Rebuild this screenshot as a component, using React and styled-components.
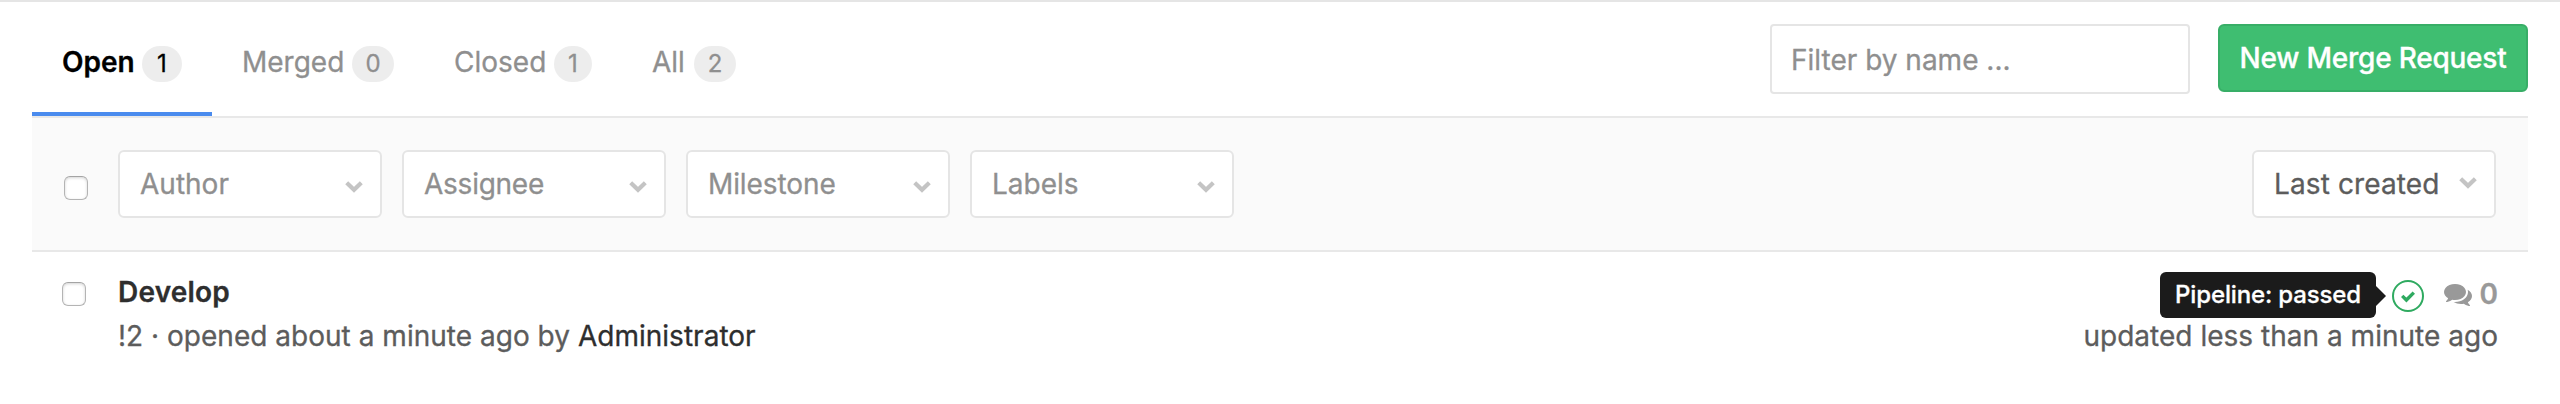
import React from 'react';
import styled, { createGlobalStyle } from 'styled-components';

const GlobalStyle = createGlobalStyle`
  *, *::before, *::after { box-sizing: border-box; }
  body {
    margin: 0;
    background: #fff;
    color: #5c5c5c;
    font: 400 28px/36px Inter, "Liberation Sans", sans-serif;
    -webkit-text-stroke: 0.3px;
  }
`;

const Page = styled.div`
  height: 404px;
  padding: 0 32px;
  border-top: 2px solid #e5e5e5;
  overflow: hidden;
`;

const TopBar = styled.header`
  display: flex;
  justify-content: space-between;
  height: 116px;
  border-bottom: 2px solid #e8e8e8;
`;

const Tabs = styled.nav`
  display: flex;
`;

const Tab = styled.a`
  display: flex;
  justify-content: space-between;
  width: ${(p) => p.$width}px;
  height: 114px;
  padding: 42px 30px 0;
  border-bottom: 4px solid ${(p) => (p.$active ? '#4a8bee' : 'transparent')};
  color: ${(p) => (p.$active ? '#000' : '#8f8f8f')};
  font-weight: ${(p) => (p.$active ? 600 : 400)};
  white-space: nowrap;
`;

const Badge = styled.span`
  width: ${(p) => p.$width}px;
  height: 36px;
  margin-top: 2px;
  border-radius: 18px;
  background: #ededed;
  font-size: 24px;
  font-weight: 400;
  line-height: 35px;
  text-align: center;
`;

const Actions = styled.div`
  display: flex;
  align-items: flex-start;
  gap: 28px;
  padding-top: 22px;
`;

const SearchInput = styled.input`
  width: 420px;
  height: 70px;
  padding: 2px 19px 0;
  border: 2px solid #e5e5e5;
  border-radius: 4px;
  background: #fff;
  color: #5c5c5c;
  font: inherit;
  outline: none;
  &::placeholder {
    color: #8f8f8f;
    opacity: 1;
  }
`;

const PrimaryButton = styled.button`
  width: 310px;
  height: 68px;
  padding: 0;
  border: 2px solid #38ae67;
  border-radius: 6px;
  background: #3fbe71;
  color: #fff;
  font: inherit;
  font-weight: 500;
  letter-spacing: -0.23px;
  white-space: nowrap;
`;

const FilterBar = styled.section`
  display: flex;
  align-items: center;
  height: 134px;
  padding: 0 32px;
  border-bottom: 2px solid #e8e8e8;
  background: #fafafa;
`;

const Checkbox = styled.input.attrs({ type: 'checkbox' })`
  appearance: none;
  flex: none;
  width: 24px;
  height: 24px;
  margin: 0;
  border: 1.5px solid #b4b4b4;
  border-top-color: #a4a4a4;
  border-radius: 6px;
  background: #fff;
  box-shadow: inset 0 1px 3px #d4d4d4;
`;

const SelectAll = styled(Checkbox)`
  margin-top: 8px;
`;

const Filters = styled.div`
  display: flex;
  gap: 20px;
  margin-left: 30px;
`;

const Select = styled.button`
  display: flex;
  align-items: center;
  justify-content: space-between;
  width: ${(p) => p.$width || 264}px;
  height: 68px;
  padding: 0 17px 0 20px;
  border: 2px solid #e5e5e5;
  border-radius: 6px;
  background: #fff;
  color: ${(p) => (p.$strong ? '#5c5c5c' : '#8f8f8f')};
  font: inherit;
  letter-spacing: ${(p) => p.$track || 0}px;
  white-space: nowrap;
`;

const SortSelect = styled(Select)`
  margin-left: auto;
`;

const ChevronIcon = styled.svg`
  flex: none;
  width: 18px;
  height: 12px;
  margin-top: ${(p) => (p.$raised ? -3 : 5)}px;
  fill: none;
  stroke: #c4c4c4;
  stroke-width: 4.2;
`;

const Row = styled.article`
  display: flex;
  align-items: flex-start;
  padding: 22px 30px 0;
`;

const RowCheckbox = styled(Checkbox)`
  margin: 8px 32px 0 0;
`;

const RowColumn = styled.div`
  display: flex;
  flex-direction: column;
  gap: 8px;
  white-space: nowrap;
`;

const RowAside = styled(RowColumn)`
  align-items: flex-end;
  margin-left: auto;
`;

const Title = styled.a`
  color: #2e2e2e;
  font-weight: 600;
  letter-spacing: 0.2px;
`;

const Meta = styled.div`
  line-height: 36px;
  letter-spacing: 0.02px;
`;

const Author = styled.a`
  color: #2e2e2e;
`;

const Status = styled.div`
  display: flex;
  align-items: flex-start;
  height: 36px;
`;

const Pipeline = styled.a`
  position: relative;
  display: flex;
  width: 32px;
  height: 32px;
  margin: 6px 20px 0 0;
`;

const Tooltip = styled.span`
  position: absolute;
  right: 48px;
  top: -8px;
  width: 216px;
  height: 46px;
  border-radius: 6px;
  background: #1b1b1b;
  color: #fff;
  font-size: 24px;
  font-weight: 500;
  letter-spacing: -0.15px;
  line-height: 46px;
  text-align: center;
  &::after {
    content: '';
    position: absolute;
    left: 100%;
    top: 14px;
    border: 10px solid transparent;
    border-right: 0;
    border-left-color: #1b1b1b;
  }
`;

const Comments = styled.a`
  display: flex;
  justify-content: space-between;
  width: 54px;
  color: #999;
  font-weight: 600;
`;

const CommentsIcon = styled.svg`
  flex: none;
  width: 28px;
  height: 22px;
  margin-top: 10px;
  fill: currentColor;
`;

const CommentCount = styled.span`
  margin-top: 2px;
`;

const Chevron = ({ raised }) => (
  <ChevronIcon viewBox="0 0 18 12" $raised={raised}>
    <path d="M1.7 1.7 9 8.8l7.3-7.1" />
  </ChevronIcon>
);

const tabs = [
  { label: 'Open', count: 1, width: 180, badge: 40, active: true },
  { label: 'Merged', count: 0, width: 212, badge: 42 },
  { label: 'Closed', count: 1, width: 198, badge: 38 },
  { label: 'All', count: 2, width: 144, badge: 42 },
];

const filters = [
  { label: 'Author' },
  { label: 'Assignee', track: -0.25 },
  { label: 'Milestone', track: -0.1 },
  { label: 'Labels' },
];

export default function App() {
  return (
    <Page>
      <GlobalStyle />
      <TopBar>
        <Tabs>
          {tabs.map((t) => (
            <Tab key={t.label} $width={t.width} $active={t.active}>
              {t.label}
              <Badge $width={t.badge}>{t.count}</Badge>
            </Tab>
          ))}
        </Tabs>
        <Actions>
          <SearchInput placeholder="Filter by name ..." />
          <PrimaryButton>New Merge Request</PrimaryButton>
        </Actions>
      </TopBar>
      <FilterBar>
        <SelectAll />
        <Filters>
          {filters.map((f) => (
            <Select key={f.label} $track={f.track}>
              {f.label}
              <Chevron />
            </Select>
          ))}
        </Filters>
        <SortSelect $width={244} $strong $track={0.12}>
          Last created
          <Chevron raised />
        </SortSelect>
      </FilterBar>
      <Row>
        <RowCheckbox />
        <RowColumn>
          <Title>Develop</Title>
          <Meta>
            !2 · opened about a minute ago by <Author>Administrator</Author>
          </Meta>
        </RowColumn>
        <RowAside>
          <Status>
            <Pipeline>
              <svg width="32" height="32" viewBox="0 0 32 32" fill="none" stroke="#2faa60">
                <circle cx="16" cy="16" r="15" strokeWidth="2" />
                <path d="M10.2 15.9 14.4 20 21.8 12.6" strokeWidth="3.4" />
              </svg>
              <Tooltip>Pipeline: passed</Tooltip>
            </Pipeline>
            <Comments>
              <CommentsIcon viewBox="0 256 1792 1408">
                <path d="M1408 768q0 139-94 257t-256.5 186.5-353.5 68.5q-86 0-176-16-124 88-278 128-36 9-86 16h-3q-11 0-20.5-8t-11.5-21q-1-3-1-6.5t.5-6.5 2-6l2.5-5 3.5-5.5 4-5 4.5-5 4-4.5q5-6 23-25t26-29.5 22.5-29 25-38.5 20.5-44q-124-72-195-177t-71-224q0-139 94-257t256.5-186.5 353.5-68.5 353.5 68.5 256.5 186.5 94 257zm384 256q0 120-71 224.5t-195 176.5q10 24 20.5 44t25 38.5 22.5 29 26 29.5 23 25q1 1 4 4.5t4.5 5 4 5 3.5 5.5l2.5 5 2 6 .5 6.5-1 6.5q-3 14-13 22t-22 7q-50-7-86-16-154-40-278-128-90 16-176 16-271 0-472-132 58 4 88 4 161 0 309-45t264-129q125-92 192-212t67-254q0-77-23-152 129 71 204 178t75 230z" />
              </CommentsIcon>
              <CommentCount>0</CommentCount>
            </Comments>
          </Status>
          <Meta>updated less than a minute ago</Meta>
        </RowAside>
      </Row>
    </Page>
  );
}
